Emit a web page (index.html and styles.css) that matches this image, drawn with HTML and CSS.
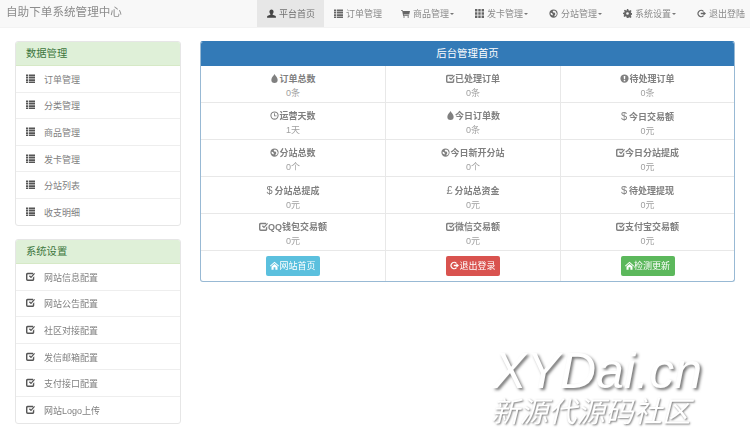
FILE: index.html
```html
<!DOCTYPE html>
<html lang="zh">
<head>
<meta charset="utf-8">
<title>自助下单系统管理中心</title>
<link rel="stylesheet" href="styles.css">
</head>
<body>
<svg class="sprite" aria-hidden="true">
  <symbol id="i-user" viewBox="0 0 12 12"><path d="M6 0.5c1.8 0 2.8 1.3 2.8 3.1 0 1.3-.5 2.4-1.3 3v1.1l3.5 1.4c.6.3.9.7.9 1.3v1.1H.1v-1.1c0-.6.3-1 .9-1.3l3.5-1.4V6.6c-.8-.6-1.3-1.7-1.3-3C3.2 1.8 4.2.5 6 .5z"/></symbol>
  <symbol id="i-list" viewBox="0 0 12 12"><path d="M0 .5h3v2.4H0zM4 .5h8v2.4H4zM0 3.7h3v2.4H0zM4 3.7h8v2.4H4zM0 6.9h3v2.4H0zM4 6.9h8v2.4H4zM0 9.9h3v2.1H0zM4 9.9h8v2.1H4z"/></symbol>
  <symbol id="i-cart" viewBox="0 0 12 12"><path d="M0 1.5h2.4l.3 1.2H12l-1 4.6H3.6l.2 1h6.7v1H2.9L1.6 2.5H0z"/><circle cx="4" cy="10.8" r="1"/><circle cx="9.6" cy="10.8" r="1"/></symbol>
  <symbol id="i-th" viewBox="0 0 12 12"><path d="M0 0h3.2v3.2H0zM4.4 0h3.2v3.2H4.4zM8.8 0H12v3.2H8.8zM0 4.4h3.2v3.2H0zM4.4 4.4h3.2v3.2H4.4zM8.8 4.4H12v3.2H8.8zM0 8.8h3.2V12H0zM4.4 8.8h3.2V12H4.4zM8.8 8.8H12V12H8.8z"/></symbol>
  <symbol id="i-globe" viewBox="0 0 12 12"><path fill-rule="evenodd" d="M6 .5a5.5 5.5 0 1 1 0 11 5.5 5.5 0 0 1 0-11zM8.6 2.6 6.2 2 4.8 3.4l1 1.4 2.2.2.4 2-1.4 2.2.8.8 2-1.6.6-2.4zM2 5l.4 2.4 2.2 1.4.6-1.2-1.2-2.2z"/></symbol>
  <symbol id="i-cog" viewBox="0 0 12 12"><path fill-rule="evenodd" d="M5 0h2l.3 1.7 1.2.5L10 1.2l1.4 1.4-1 1.5.5 1.2 1.7.3v2l-1.7.3-.5 1.2 1 1.5-1.4 1.4-1.5-1-1.2.5L7 12H5l-.3-1.7-1.2-.5-1.5 1L.6 9.4l1-1.5-.5-1.2L0 6.9v-2l1.7-.3.5-1.2-1-1.5L2.6 1l1.5 1 1.2-.5zM6 4.2a1.8 1.8 0 1 0 0 3.6 1.8 1.8 0 0 0 0-3.6z"/></symbol>
  <symbol id="i-out" viewBox="0 0 12 12"><path d="M5.5 1a5 5 0 0 1 3.6 1.5L7.9 3.7A3.3 3.3 0 1 0 7.9 8.3l1.2 1.2A5 5 0 1 1 5.5 1z"/><path d="M5 5h3.5V3L12 6 8.5 9V7H5z"/></symbol>
  <symbol id="i-tint" viewBox="0 0 12 12"><path d="M6 0c.8 2.2 4.2 4.6 4.2 7.6A4.2 4.2 0 0 1 6 12a4.2 4.2 0 0 1-4.2-4.4C1.8 4.6 5.2 2.2 6 0z"/></symbol>
  <symbol id="i-check" viewBox="0 0 12 12"><path d="M2 1h7.5v1.9H2.6a.7.7 0 0 0-.7.7v5.8c0 .4.3.7.7.7h5.8c.4 0 .7-.3.7-.7V7.5L11 5.6v4C11 10.9 10 12 8.7 12H2.3A2.3 2.3 0 0 1 0 9.7V3.2C0 2 .9 1 2 1z"/><path d="M5.2 4.4 6.7 5.9 10.8 1.2 12 2.4 6.7 8.4 3.9 5.7z"/></symbol>
  <symbol id="i-time" viewBox="0 0 12 12"><path fill-rule="evenodd" d="M6 .5a5.5 5.5 0 1 1 0 11 5.5 5.5 0 0 1 0-11zm0 1.4a4.1 4.1 0 1 0 0 8.2 4.1 4.1 0 0 0 0-8.2z"/><path d="M5.4 3h1.2v2.9h2.2v1.2H5.4z"/></symbol>
  <symbol id="i-excl" viewBox="0 0 12 12"><path fill-rule="evenodd" d="M6 .5a5.5 5.5 0 1 1 0 11 5.5 5.5 0 0 1 0-11zM4.9 2.5l.3 4.4h1.6l.3-4.4zM5 8v1.6h2V8z"/></symbol>
  <symbol id="i-home" viewBox="0 0 12 12"><path d="M6 1l6 5.4-.8.9L6 2.8.8 7.3 0 6.4zM2 7.4l4-3.5 4 3.5V11.5H7.2V8.4H4.8v3.1H2z"/></symbol>
</svg>

<header class="navbar">
  <div class="brand">自助下单系统管理中心</div>
  <nav class="nav">
    <a class="nav-item active"><svg class="icon nav-icon"><use href="#i-user"/></svg>平台首页</a>
    <a class="nav-item"><svg class="icon nav-icon"><use href="#i-list"/></svg>订单管理</a>
    <a class="nav-item"><svg class="icon nav-icon"><use href="#i-cart"/></svg>商品管理<span class="caret"></span></a>
    <a class="nav-item"><svg class="icon nav-icon"><use href="#i-th"/></svg>发卡管理<span class="caret"></span></a>
    <a class="nav-item"><svg class="icon nav-icon"><use href="#i-globe"/></svg>分站管理<span class="caret"></span></a>
    <a class="nav-item"><svg class="icon nav-icon"><use href="#i-cog"/></svg>系统设置<span class="caret"></span></a>
    <a class="nav-item nav-last"><svg class="icon nav-icon"><use href="#i-out"/></svg>退出登陆</a>
  </nav>
</header>

<div class="content">
  <aside class="sidebar">
    <section class="side-panel">
      <h3 class="side-heading">数据管理</h3>
      <a class="side-row"><svg class="icon side-icon"><use href="#i-list"/></svg>订单管理</a>
      <a class="side-row"><svg class="icon side-icon"><use href="#i-list"/></svg>分类管理</a>
      <a class="side-row"><svg class="icon side-icon"><use href="#i-list"/></svg>商品管理</a>
      <a class="side-row"><svg class="icon side-icon"><use href="#i-list"/></svg>发卡管理</a>
      <a class="side-row"><svg class="icon side-icon"><use href="#i-list"/></svg>分站列表</a>
      <a class="side-row"><svg class="icon side-icon"><use href="#i-list"/></svg>收支明细</a>
    </section>
    <section class="side-panel">
      <h3 class="side-heading">系统设置</h3>
      <a class="side-row"><svg class="icon side-icon"><use href="#i-check"/></svg>网站信息配置</a>
      <a class="side-row"><svg class="icon side-icon"><use href="#i-check"/></svg>网站公告配置</a>
      <a class="side-row"><svg class="icon side-icon"><use href="#i-check"/></svg>社区对接配置</a>
      <a class="side-row"><svg class="icon side-icon"><use href="#i-check"/></svg>发信邮箱配置</a>
      <a class="side-row"><svg class="icon side-icon"><use href="#i-check"/></svg>支付接口配置</a>
      <a class="side-row"><svg class="icon side-icon"><use href="#i-check"/></svg>网站Logo上传</a>
    </section>
  </aside>

  <main class="main-panel">
    <h2 class="main-heading">后台管理首页</h2>
    <div class="stats">
      <div class="cell"><b class="label"><svg class="icon"><use href="#i-tint"/></svg>订单总数</b><span class="value">0条</span></div>
      <div class="cell"><b class="label"><svg class="icon"><use href="#i-check"/></svg>已处理订单</b><span class="value">0条</span></div>
      <div class="cell"><b class="label"><svg class="icon"><use href="#i-excl"/></svg>待处理订单</b><span class="value">0条</span></div>

      <div class="cell"><b class="label"><svg class="icon"><use href="#i-time"/></svg>运营天数</b><span class="value">1天</span></div>
      <div class="cell"><b class="label"><svg class="icon"><use href="#i-tint"/></svg>今日订单数</b><span class="value">0条</span></div>
      <div class="cell"><b class="label"><span class="sym">$</span>今日交易额</b><span class="value">0元</span></div>

      <div class="cell"><b class="label"><svg class="icon"><use href="#i-globe"/></svg>分站总数</b><span class="value">0个</span></div>
      <div class="cell"><b class="label"><svg class="icon"><use href="#i-globe"/></svg>今日新开分站</b><span class="value">0个</span></div>
      <div class="cell"><b class="label"><svg class="icon"><use href="#i-check"/></svg>今日分站提成</b><span class="value">0元</span></div>

      <div class="cell"><b class="label"><span class="sym">$</span>分站总提成</b><span class="value">0元</span></div>
      <div class="cell"><b class="label"><span class="sym">£</span>分站总资金</b><span class="value">0元</span></div>
      <div class="cell"><b class="label"><span class="sym">$</span>待处理提现</b><span class="value">0元</span></div>

      <div class="cell"><b class="label"><svg class="icon"><use href="#i-check"/></svg>QQ钱包交易额</b><span class="value">0元</span></div>
      <div class="cell"><b class="label"><svg class="icon"><use href="#i-check"/></svg>微信交易额</b><span class="value">0元</span></div>
      <div class="cell"><b class="label"><svg class="icon"><use href="#i-check"/></svg>支付宝交易额</b><span class="value">0元</span></div>

      <div class="cell btn-cell"><a class="btn btn-info"><svg class="icon"><use href="#i-home"/></svg>网站首页</a></div>
      <div class="cell btn-cell"><a class="btn btn-danger"><svg class="icon"><use href="#i-out"/></svg>退出登录</a></div>
      <div class="cell btn-cell"><a class="btn btn-success"><svg class="icon"><use href="#i-home"/></svg>检测更新</a></div>
    </div>
  </main>
</div>

<div class="watermark">
  <div class="wm-en">XYDai.cn</div>
  <div class="wm-cn">新源代源码社区</div>
</div>
</body>
</html>
```

FILE: styles.css
```css
* { box-sizing: border-box; }

html, body {
  margin: 0;
  height: 430px;
  overflow: hidden;
  background: #fff;
}

body {
  position: relative;
  font-family: "Liberation Sans", "Noto Sans CJK SC", sans-serif;
  font-size: 9px;
  line-height: 14px;
  color: #777;
}

.sprite { display: none; }

.icon {
  width: 9px;
  height: 9px;
  fill: currentColor;
  flex: none;
  vertical-align: -1px;
}

/* Navbar */
.navbar {
  display: flex;
  justify-content: space-between;
  height: 28px;
  padding-left: 6px;
  background: #f8f8f8;
  border-bottom: 1px solid #f3f3f3;
  filter: blur(0.5px);
}

.brand {
  font-size: 11.6px;
  line-height: 23px;
  color: #8c8c8c;
}

.nav { display: flex; }

.nav-item {
  display: flex;
  align-items: center;
  height: 27px;
  padding: 0 9px 0 10px;
  color: #8a8a8a;
  white-space: nowrap;
}

.nav-item.active {
  background: #e7e7e7;
  color: #707070;
}

.nav-last { padding-right: 5px; }

.nav-icon {
  margin-right: 3px;
  color: #666;
}

.active .nav-icon { color: #444; }

.caret {
  width: 0;
  height: 0;
  margin: 0 2px 0 1px;
  border-top: 2.5px solid #777;
  border-left: 2.5px solid transparent;
  border-right: 2.5px solid transparent;
}

/* Page body */
.content {
  display: flex;
  align-items: flex-start;
  gap: 19px;
  padding: 13px 15px 0;
  filter: blur(0.5px);
}

.sidebar {
  display: flex;
  flex-direction: column;
  gap: 13.4px;
  width: 166px;
  flex: none;
}

.side-panel {
  border: 1px solid #e6e6e6;
  border-radius: 3px;
  background: #fff;
  overflow: hidden;
}

.side-heading {
  margin: 0;
  height: 24px;
  padding: 0 10px;
  font-size: 10.3px;
  font-weight: 400;
  line-height: 24px;
  color: #3c763d;
  background: #dff0d8;
  border-bottom: 1px solid #d6e9c6;
}

.side-row {
  display: flex;
  align-items: center;
  height: 26.6px;
  padding: 2px 0 0 10px;
  color: #808080;
  border-bottom: 1px solid #eee;
}

.side-row:last-child {
  height: 25.6px;
  border-bottom: 0;
}

.side-icon {
  margin: 0 9px 3px 0;
  color: #555;
}

/* Main panel */
.main-panel {
  width: 535px;
  flex: none;
  border: 1px solid #98b9d4;
  border-top-color: #337ab7;
  border-radius: 3px;
  overflow: hidden;
  background: #fff;
}

.main-heading {
  margin: 0;
  height: 24px;
  font-size: 10.4px;
  font-weight: 400;
  line-height: 24px;
  text-align: center;
  color: #fff;
  background: #337ab7;
}

.stats {
  display: grid;
  grid-template-columns: 185px 175px 173px;
  grid-template-rows: repeat(5, 37px) 29.5px;
}

.cell {
  display: flex;
  flex-direction: column;
  align-items: center;
  padding-top: 6px;
  border-bottom: 1px solid #e8e8e8;
  border-right: 1px solid #e8e8e8;
}

.cell:nth-child(3n) { border-right: 0; }

.btn-cell {
  border-bottom: 0;
  padding-top: 5px;
}

.label {
  font-weight: 700;
  color: #808080;
  white-space: nowrap;
}

.sym {
  font-size: 11px;
  font-weight: 400;
  margin-right: 2px;
}

.value {
  color: #a0a0a0;
}

.btn {
  display: block;
  width: 54px;
  height: 20px;
  border-radius: 2px;
  font-size: 9px;
  line-height: 20px;
  text-align: center;
  color: #fff;
}

.btn-info { background: #5bc0de; }
.btn-danger { background: #d9534f; }
.btn-success { background: #5cb85c; }

/* Watermark sits over the page */
.watermark {
  position: absolute;
  left: 494px;
  top: 345px;
  color: #fff;
  font-style: italic;
  white-space: nowrap;
  filter: blur(0.4px);
}

.wm-en {
  margin-left: -1px;
  font-size: 50px;
  line-height: 52px;
  letter-spacing: 0.1px;
  text-shadow: 2px 2px 3px #777;
}

.wm-cn {
  margin-left: -3px;
  font-size: 28.5px;
  line-height: 30px;
  text-shadow: 1px 1px 2px #777;
}
```
